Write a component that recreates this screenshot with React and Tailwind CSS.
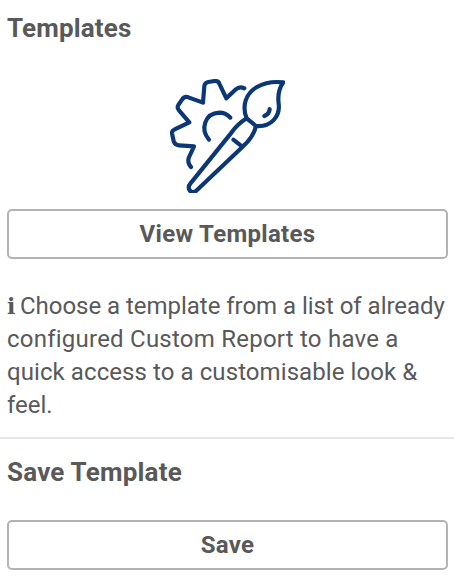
import React from 'react';

function BrushIcon() {
  return (
    <svg
      width="115"
      height="114"
      viewBox="30 27 345 342"
      fill="none"
      stroke="#0b3776"
      strokeWidth="12.5"
      strokeLinecap="round"
      strokeLinejoin="round"
    >
      <path d="M93 291Q82 280 86 264L102 229L57 226Q44 225 41 213L36 190Q35 182 44 178L88 157L57 121Q50 113 55 105L66 89Q73 78 85 82L129 98L133 48Q134 38 145 36L164 33Q176 32 179 43L199 85L226 59Q239 47 253 55" />
      <path d="M147 209C120 178 134 130 178 128Q198 128 211 143" />
      <path d="M260 145C245 108 257 70 291 51C315 37 343 34 370 37C354 59 353 78 356 101C361 139 333 172 288 168Z" />
      <path d="M329 117Q328 132 313 138" />
      <path d="M260 145Q233 162 215 187L91 341C80 354 91 373 108 363L248 230Q280 202 288 168" />
      <path d="M220 209L242 226" />
    </svg>
  );
}

function Button({ children }) {
  return (
    <button
      type="button"
      className="h-[50px] w-full rounded-[5px] border-2 border-[#b3b3b3] bg-white text-[24px] leading-[46px] font-bold tracking-[0.3px]"
    >
      {children}
    </button>
  );
}

export default function App() {
  return (
    <div className="h-[582px] w-[454px] overflow-hidden bg-white font-['Roboto',sans-serif] text-[#595959]">
      <section className="h-[437px] pt-3 pr-[6px] pl-[7px]">
        <h2 className="h-[67px] text-[26px] leading-8 font-bold tracking-[0.15px]">Templates</h2>
        <div className="flex h-[130px] justify-center">
          <BrushIcon />
        </div>
        <Button>View Templates</Button>
        <p className="pt-[31px] text-[24px] leading-[33px] whitespace-nowrap">
          <span className="inline-block w-[13px] font-['DejaVu_Serif',serif] text-[22px] leading-none font-bold">i</span>
          <span className="tracking-[-0.03px]">Choose a template from a list of already</span><br />
          <span className="tracking-[0.23px]">configured Custom Report to have a</span><br />
          <span className="tracking-[0.08px]">quick access to a customisable look &amp;</span><br />
          <span>feel.</span>
        </p>
      </section>
      <section className="border-t-2 border-[#e6e6e6] pt-[17px] pr-[6px] pl-[7px]">
        <h2 className="h-16 text-[26px] leading-8 font-bold tracking-[0.2px]">Save Template</h2>
        <Button>Save</Button>
      </section>
    </div>
  );
}
